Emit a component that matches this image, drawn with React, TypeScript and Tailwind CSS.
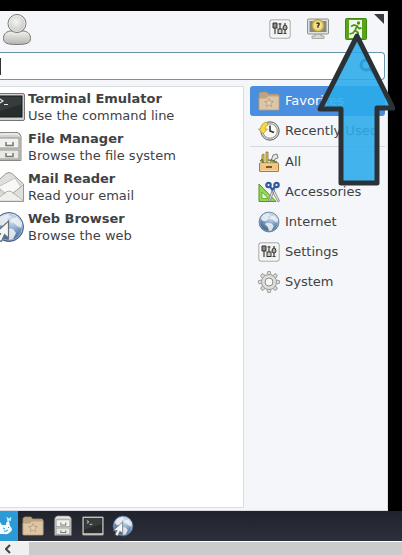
import React from "react";

function UserIcon() {
  return (
    <svg width="32" height="34" viewBox="0 0 32 34" className="block">
      <defs>
        <linearGradient id="body" x1="0" y1="0" x2="0" y2="1">
          <stop offset="0" stopColor="#f2f2ef" />
          <stop offset="1" stopColor="#b4b4b0" />
        </linearGradient>
        <radialGradient id="head" cx="0.45" cy="0.4" r="0.65">
          <stop offset="0" stopColor="#f4f4f1" />
          <stop offset="1" stopColor="#c2c2be" />
        </radialGradient>
      </defs>
      <path d="M10 18 C5 19 3.500 22 3.500 25.500 C3.500 30 7 31.500 17 31.500 C27 31.500 30.500 30 30.500 25.500 C30.500 22 29 19 24 18 Z" fill="url(#body)" stroke="#777773" />
      <circle cx="17" cy="10.500" r="9" fill="url(#head)" stroke="#777773" />
      <circle cx="17" cy="10.500" r="8" fill="none" stroke="#fff" strokeOpacity="0.5" />
    </svg>
  );
}

function MixerIcon() {
  return (
    <svg width="22" height="22" viewBox="0 0 22 22" className="block flex-none">
      <rect x="1" y="2" width="20" height="18" rx="1.500" fill="#f1f1ef" stroke="#8b8b89" />
      <rect x="2" y="3" width="18" height="16" rx="1" fill="none" stroke="#fff" />
      <path d="M6 5v11M11 5v11M16 5v11" stroke="#6a6a68" strokeWidth="1.600" />
      <path d="M4 5h4v5H4z" fill="#8a8a88" stroke="#333" />
      <rect x="9" y="11" width="4" height="4.500" fill="#ccc" stroke="#333" />
      <path d="M14 10q0-3 2-3t2 3q0 2-2 2t-2-2z" fill="#aaa" stroke="#333" />
      <path d="M14.500 15.500h3M9.500 6h3" stroke="#444" />
    </svg>
  );
}

function LockScreenIcon() {
  return (
    <svg width="22" height="22" viewBox="0 0 22 22" className="block">
      <path d="M8 15h6v3h3v2.500H5V18h3z" fill="#d8d8d6" stroke="#9b9b98" strokeWidth="0.800" />
      <rect x="0.500" y="1" width="21" height="15" rx="1" fill="#e2e2df" stroke="#8e8e8a" />
      <rect x="2.500" y="3" width="17" height="11" fill="#858984" />
      <circle cx="11" cy="7.500" r="6" fill="#dfc865" stroke="#b7973c" />
      <circle cx="11" cy="7.500" r="4.200" fill="#f2e28d" />
      <path d="M9.500 5.800q1.500-1.600 2.700 0 0 1.200-1.200 2v2" fill="none" stroke="#3e3823" strokeWidth="1.500" />
    </svg>
  );
}

function ExitIcon() {
  return (
    <svg width="22" height="22" viewBox="0 0 22 22" className="block">
      <rect x="0.500" y="0.500" width="21" height="21" rx="1" fill="#58a51b" stroke="#3f8a0d" />
      <rect x="4" y="2" width="13" height="18" fill="#f2f8ec" />
      <circle cx="13.500" cy="5" r="1.700" fill="#4a9415" />
      <path d="M6 8.500l3-1.500 3 1-2 4.500 3 2v4M10 12.500l-2 2.500-3.500 1M12 8l2 2.500 2.500-.5" fill="none" stroke="#4a9415" strokeWidth="1.800" />
    </svg>
  );
}

function TerminalArt() {
  return (
    <g>
      <rect x="0.500" y="2.500" width="31" height="27" rx="1.500" fill="#d1d1ce" stroke="#747472" />
      <rect x="3" y="5" width="26" height="21" fill="#272d2d" stroke="#171b1b" />
      <path d="M3.500 5.500h25v8L3.500 21z" fill="#fff" opacity="0.070" />
      <path d="M7 8l3 2-3 2M11 13.500h4" fill="none" stroke="#e8e8e8" strokeWidth="1.200" />
    </g>
  );
}

function CabinetArt() {
  return (
    <g>
      <path d="M3 5.500Q4 1.500 7 1.500h16q3 0 4 4v24H3z" fill="#d2d2ce" stroke="#8b8b86" />
      <path d="M5 5q1-2 3-2h14q2 0 3 2" fill="none" stroke="#fff" />
      <rect x="5" y="7" width="20" height="10" fill="#f1f1ed" stroke="#92928d" />
      <rect x="5" y="19" width="20" height="9" fill="#e8e8e4" stroke="#92928d" />
      <path d="M12 11v3.500h7V11M12 22v3.500h7V22" fill="none" stroke="#777" strokeWidth="1.500" />
      <path d="M13 12.500h5M13 23.500h5" stroke="#fff" />
    </g>
  );
}

function GlobeArt() {
  return (
    <g>
      <defs>
        <radialGradient id="sea" cx="0.6" cy="0.25" r="0.85">
          <stop offset="0" stopColor="#dce8f3" />
          <stop offset="0.500" stopColor="#7698c0" />
          <stop offset="1" stopColor="#254877" />
        </radialGradient>
      </defs>
      <circle cx="16" cy="16" r="14.500" fill="url(#sea)" stroke="#49658a" />
      <path d="M8 5l7-2 3 3-4 2 2 3-5 4-5-1-2-4zM19 8l5-2 5 6-1 5-4-2-3-3-4-1zM13 17l7 1 3 4-3 6-4 1-2-6-4-4z" fill="#edf1f2" opacity="0.880" />
      <circle cx="16" cy="16" r="13.300" fill="none" stroke="#fff" strokeOpacity="0.450" />
    </g>
  );
}

function CursorArt() {
  return <path d="M15.500 10v17l-4-3.500-3 7-4-2 3-6H2z" fill="#f6f6f6" stroke="#68717c" strokeWidth="1.200" />;
}

function MailArt() {
  return (
    <g>
      <path d="M1.500 13L13 2.500q3-2 6 0L30.500 13v17.500h-29z" fill="#dfdfdb" stroke="#999994" />
      <path d="M5 16L22 7l6 9-9 7-10-1z" fill="#f8f8f6" stroke="#c0c0bc" />
      <path d="M2 29.500L13 21q3-2 6 0l11 8.500M2 14l10 8M30 14l-10 8" fill="none" stroke="#b1b1ad" />
      <path d="M3 29L14 21.500q2-1 4 0L29 29z" fill="#efefec" />
    </g>
  );
}

function FolderIcon() {
  return (
    <svg width="22" height="22" viewBox="0 0 22 22" className="block flex-none">
      <path d="M1 5V3.500L2.500 2H9l1.500 2H20l1 1v14.500H1z" fill="#bda583" stroke="#a38b69" strokeWidth="0.800" />
      <path d="M1 8h7l2-2h11v13.500q0 .5-1 .5H2q-1 0-1-.5z" fill="#dcc6a5" stroke="#b89f7b" strokeWidth="0.800" />
      <path d="M11 8.500l1.200 2.900 3.100.2-2.400 2 .8 3.100-2.700-1.700-2.700 1.700.8-3.100-2.400-2 3.100-.2z" fill="#e3d0b3" stroke="#b39b77" strokeWidth="0.800" />
    </svg>
  );
}

function ClockIcon() {
  return (
    <svg width="22" height="22" viewBox="0 0 22 22" className="block flex-none">
      <circle cx="12" cy="11" r="9.200" fill="#d4d4d0" stroke="#666663" />
      <circle cx="12" cy="11" r="7.200" fill="#fafaf8" stroke="#969692" />
      <path d="M12 5.500V11l4 1.500" fill="none" stroke="#292929" strokeWidth="1.500" />
      <path d="M9 2Q3 3 2.500 9H0.500l4.500 5 4.500-5H7q0-3 3-4z" fill="#f2d94c" stroke="#bd9d21" strokeWidth="0.800" />
    </svg>
  );
}

function ToolboxIcon() {
  return (
    <svg width="22" height="22" viewBox="0 0 22 22" className="block flex-none">
      <path d="M4 4l2-1v11H4zM8 1h2v13H8z" fill="#edcf46" stroke="#756024" strokeWidth="0.700" />
      <path d="M12 13l3-9 4-1 1 4-3 1-2 6z" fill="#e7e7e3" stroke="#646460" strokeWidth="0.800" />
      <path d="M2 10l2-2 2 5M10 9h4l5 2v3" fill="#81a64c" stroke="#536c34" />
      <rect x="1.500" y="12" width="19" height="8.500" rx="0.500" fill="#efc584" stroke="#a9783a" />
      <path d="M2.500 13h17M2.500 19.500h17" stroke="#f8d9a0" />
      <rect x="8" y="15" width="6" height="2" fill="#815626" />
    </svg>
  );
}

function AccessoriesIcon() {
  return (
    <svg width="22" height="22" viewBox="0 0 22 22" className="block flex-none">
      <path d="M1 3v17.500h17z" fill="#94d84e" stroke="#4d981f" />
      <path d="M4 11v6.500h6z" fill="#f4f6f8" stroke="#4d981f" strokeWidth="0.700" />
      <path d="M13 8l2-1 6.500 13-1.500 1zM15 7l2 1-5 12-2 1z" fill="#e8e8e5" stroke="#777" strokeWidth="0.800" />
      <circle cx="10.500" cy="4" r="2.200" fill="none" stroke="#315c98" strokeWidth="2.200" />
      <circle cx="18.500" cy="4" r="2.200" fill="none" stroke="#315c98" strokeWidth="2.200" />
      <path d="M12 6l2.500 2.500L17 6" fill="none" stroke="#315c98" strokeWidth="2" />
    </svg>
  );
}

function GearIcon() {
  const teeth = [0, 45, 90, 135, 180, 225, 270, 315];
  return (
    <svg width="22" height="22" viewBox="0 0 22 22" className="block flex-none">
      {teeth.map((angle) => (
        <path key={angle} d="M9 4l.7-3.500h2.600L13 4z" transform={`rotate(${angle} 11 11)`} fill="#dededc" stroke="#a0a09e" />
      ))}
      <circle cx="11" cy="11" r="7.500" fill="#dededc" stroke="#a0a09e" />
      <circle cx="11" cy="11" r="6" fill="#dededc" />
      <circle cx="11" cy="11" r="4" fill="#f5f7f9" stroke="#8d8d8b" />
    </svg>
  );
}

function GlobeIcon() {
  return (
    <svg width="22" height="22" viewBox="0 0 32 32" className="block flex-none">
      <GlobeArt />
    </svg>
  );
}

const apps = [
  { name: "Terminal Emulator", note: "Use the command line", art: <TerminalArt /> },
  { name: "File Manager", note: "Browse the file system", art: <g transform="translate(1 0)"><CabinetArt /></g> },
  { name: "Mail Reader", note: "Read your email", art: <MailArt /> },
  { name: "Web Browser", note: "Browse the web", art: <g><GlobeArt /><CursorArt /></g> },
];

const categories = [
  { name: "All", icon: <ToolboxIcon /> },
  { name: "Accessories", icon: <AccessoriesIcon /> },
  { name: "Internet", icon: <GlobeIcon /> },
  { name: "Settings", icon: <MixerIcon /> },
  { name: "System", icon: <GearIcon /> },
];

function Category({ name, icon, active = false }: { name: string; icon: React.ReactNode; active?: boolean }) {
  return (
    <button
      className={`flex h-[30px] w-full items-center gap-[5px] whitespace-nowrap rounded-[3px] px-2 text-left ${active ? "bg-[#4a8ee0] text-white" : ""}`}
    >
      {icon}
      <span className="pb-[2px]">{name}</span>
    </button>
  );
}

function PointerArrow() {
  return (
    <svg width="80" height="160" viewBox="0 0 80 160" className="pointer-events-none absolute top-[30px] right-[7px]">
      <path d="M42 6L78 78H62V153H26V79H5Z" fill="#2cabea" fillOpacity="0.890" stroke="#2b3237" strokeWidth="5" strokeLinejoin="round" />
    </svg>
  );
}

export default function App() {
  return (
    <div className="relative overflow-hidden bg-black font-['DejaVu_Sans',sans-serif] text-[13px] leading-[17px] text-[#3f4245]">
      <main className="mt-[11px] mr-[14px] flex flex-col border-r border-b border-[#d9dde2] bg-[#f4f6f9]">
        <header className="flex h-[41px] items-start justify-between">
          <button aria-label="User profile" className="pt-[2px]"><UserIcon /></button>
          <div className="flex gap-[2px] pr-[2px]">
            <div className="flex gap-4 pt-[7px]">
              <button aria-label="All settings"><MixerIcon /></button>
              <button aria-label="Lock screen"><LockScreenIcon /></button>
              <button aria-label="Log out"><ExitIcon /></button>
            </div>
            <svg width="16" height="16" viewBox="0 0 16 16" className="mt-[2px]">
              <path d="M5 1h10v10z" fill="#3a3c3f" />
            </svg>
          </div>
        </header>
        <div className="mr-[2px] flex h-7 items-center rounded-r-[4px] border-y border-r border-[#6796ad] bg-white">
          <span className="h-[17px] w-px flex-none bg-[#333]" />
          <input aria-label="Search applications" className="h-full min-w-0 flex-1 bg-transparent px-1 outline-none" />
          <button aria-label="Search" className="pr-2">
            <svg width="18" height="18" viewBox="0 0 18 18" className="block">
              <circle cx="8" cy="8" r="5" fill="none" stroke="#1b3c52" strokeWidth="3" />
              <path d="M12 12l4 4" stroke="#1b3c52" strokeWidth="3" />
            </svg>
          </button>
        </div>
        <div className="mt-1.5 mb-[2px] flex gap-1.5">
          <ul className="h-[422px] min-w-0 flex-1 border-y border-r border-[#d9dee3] bg-white">
            {apps.map((app) => (
              <li key={app.name}>
                <button className="flex h-10 w-full items-center gap-[3px] whitespace-nowrap text-left">
                  <svg width="25" height="32" viewBox="7 0 25 32" className="block flex-none">{app.art}</svg>
                  <span>
                    <strong className="block">{app.name}</strong>
                    <span className="block">{app.note}</span>
                  </span>
                </button>
              </li>
            ))}
          </ul>
          <nav aria-label="Categories" className="mr-[2px] w-[135px] flex-none">
            <Category name="Favorites" icon={<FolderIcon />} active />
            <Category name="Recently Used" icon={<ClockIcon />} />
            <hr className="border-t border-[#d5d8dc]" />
            {categories.map((c) => <Category key={c.name} name={c.name} icon={c.icon} />)}
          </nav>
        </div>
      </main>
      <footer>
        <div className="flex h-[30px] items-center bg-linear-to-b from-[#20232c] to-[#2d303a]">
          <button aria-label="Applications menu" className="mr-1 flex-none bg-[#2a9bd6]">
            <svg width="18" height="30" viewBox="0 0 18 30" className="block">
              <path d="M0 11l2 3h4q0-4 3-4l1 5q2 2 2 4-3 5-8 4H0z" fill="#f2fbff" />
              <path d="M3 17l2 1M8 17l1-1M4 20q2 1 4-1" stroke="#2a9bd6" fill="none" />
              <path d="M7 6l1 4 1-3 1 3 1-4" fill="none" stroke="#d8f1fd" />
            </svg>
          </button>
          <div className="flex gap-2">
            <button aria-label="Home folder"><FolderIcon /></button>
            <button aria-label="File Manager"><svg width="22" height="22" viewBox="-1 0 32 32" className="block"><CabinetArt /></svg></button>
            <button aria-label="Terminal Emulator"><svg width="22" height="22" viewBox="0 0 32 32" className="block"><TerminalArt /></svg></button>
            <button aria-label="Web Browser"><svg width="22" height="22" viewBox="0 0 32 32" className="block"><GlobeArt /><CursorArt /></svg></button>
          </div>
        </div>
        <div className="flex h-[14px] border-t border-white bg-[#cbcbcb]">
          <button aria-label="Scroll left" className="flex w-[29px] items-center justify-center bg-[#f0f0f0] pr-[13px]">
            <svg width="6" height="10" viewBox="0 0 6 10" className="block">
              <path d="M5 1L1 5l4 4" fill="none" stroke="#444" strokeWidth="2" />
            </svg>
          </button>
        </div>
      </footer>
      <PointerArrow />
    </div>
  );
}
